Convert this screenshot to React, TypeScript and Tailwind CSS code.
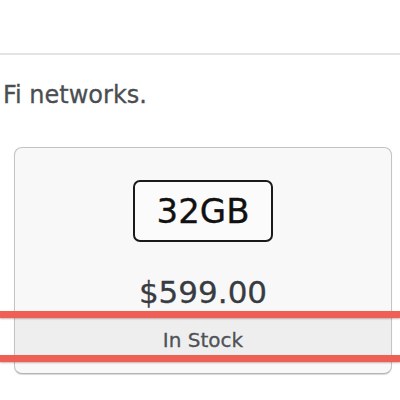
import React from "react";

export default function App() {
  return (
    <div
      className="relative w-[400px] h-[400px] overflow-hidden bg-white"
      style={{ fontFamily: '"DejaVu Sans", "Lucida Grande", sans-serif' }}
    >
      <div className="h-[53px]" />
      <div className="h-[2px] bg-[#e4e4e4]" />
      <div className="mt-[28px] pl-[3px] text-[24px] leading-[24px] text-[#4a4e53] whitespace-nowrap [-webkit-text-stroke:0.3px_#4a4e53]">
        Fi networks.
      </div>
      <div className="ml-[14px] mt-[40px] w-[378px] h-[227px] rounded-[8px] border border-[#c4c4c4] border-b-[#b4b4b4] bg-[#f8f8f8] shadow-[0_1px_1px_rgba(0,0,0,0.15)] flex flex-col items-center overflow-hidden">
        <div className="mt-[32px] w-[140px] h-[62px] rounded-[7px] border-2 border-[#1a1a1a] bg-[#fbfbfb] flex items-center justify-center text-[34px] leading-none text-[#111] [-webkit-text-stroke:0.3px_#111]">
          32GB
        </div>
        <div className="mt-[35px] text-[31px] leading-[31px] text-[#383c42] [-webkit-text-stroke:0.3px_#383c42]">$599.00</div>
        <div className="mt-[4px] w-full h-[48px] bg-[#eeeeee] flex justify-center pt-[18px] text-[20px] leading-[20px] text-[#4e5257] [-webkit-text-stroke:0.3px_#4e5257]">
          In Stock
        </div>
      </div>
      <div className="absolute left-0 top-[311px] w-full h-[7px] bg-[#ee5f56] shadow-[0_1px_2px_rgba(120,40,30,0.35)]" />
      <div className="absolute left-0 top-[355px] w-full h-[7px] bg-[#ee5f56] shadow-[0_1px_2px_rgba(120,40,30,0.35)]" />
    </div>
  );
}
